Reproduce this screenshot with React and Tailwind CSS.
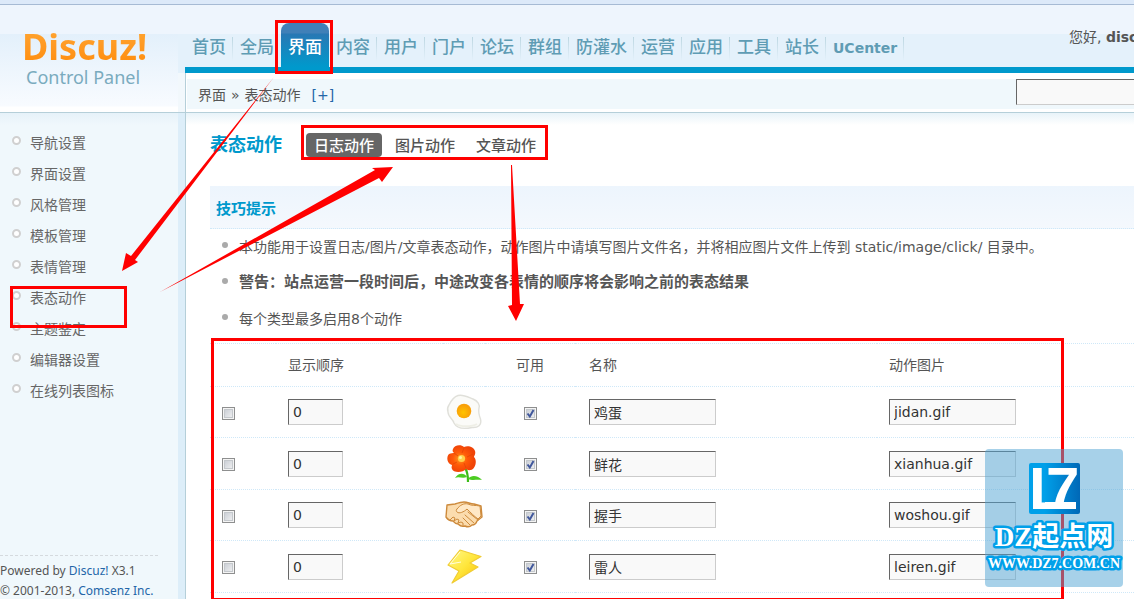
// src/App.jsx
import React from 'react';
import clsx from 'clsx';

const navItems = ['首页', '全局', '界面', '内容', '用户', '门户', '论坛', '群组', '防灌水', '运营', '应用', '工具', '站长', 'UCenter'];
const sideItems = ['导航设置', '界面设置', '风格管理', '模板管理', '表情管理', '表态动作', '主题鉴定', '编辑器设置', '在线列表图标'];
const tabs = ['日志动作', '图片动作', '文章动作'];

const rows = [
  { name: '鸡蛋', file: 'jidan.gif', Icon: EggIcon },
  { name: '鲜花', file: 'xianhua.gif', Icon: FlowerIcon },
  { name: '握手', file: 'woshou.gif', Icon: HandshakeIcon },
  { name: '雷人', file: 'leiren.gif', Icon: BoltIcon },
];

const inputClass = 'h-[26px] border border-t-[#666] border-l-[#666] border-r-[#ccc] border-b-[#ccc] bg-[#f9f9f9] px-1 text-sm text-[#333] outline-none';

function EggIcon() {
  return (
    <svg width="40" height="40" viewBox="0 0 40 40" className="mx-auto block">
      <defs>
        <radialGradient id="yolk" cx="45%" cy="60%">
          <stop offset="0" stopColor="#ffc400" />
          <stop offset="1" stopColor="#f9a008" />
        </radialGradient>
      </defs>
      <path d="M5 13C7 9 9 5 14 3.500C19 2 24 5 29 7C34 9 36 13 35 16C34 20 35 23 36.500 27C38 33 34 36 28 35.500C21 37 13 37 10 31C9 27 4 25 4 20C3 17 3.500 15 5 13Z" fill="#fbfbf8" stroke="#e0e0da" strokeWidth="1.4" />
      <path d="M12 32C16 35 28 35 33 32" fill="none" stroke="#efefe6" strokeWidth="2" />
      <circle cx="20" cy="19" r="7.3" fill="url(#yolk)" />
    </svg>
  );
}

function FlowerIcon() {
  return (
    <svg width="40" height="40" viewBox="0 0 40 40" className="mx-auto block">
      <defs>
        <radialGradient id="petal" cx="45%" cy="50%">
          <stop offset="0" stopColor="#ff9a20" />
          <stop offset="0.5" stopColor="#ff5a08" />
          <stop offset="1" stopColor="#f04408" />
        </radialGradient>
      </defs>
      <path d="M21 24C24 28 24 33 24 38" fill="none" stroke="#3cbc18" strokeWidth="2.2" />
      <path d="M23 33C18 35 15 32 11 34C14 29 20 28 23 33Z" fill="#4ccc22" />
      <path d="M24 35C28 30 34 32 38 36C33 35 29 37 24 35Z" fill="#4ccc22" />
      <path d="M9 5C10 1 17 0 20 3C24 1 30 3 31 7C32 10 30 12 30 13C33 16 32 22 29 25C26 27 23 26 22 25C19 29 9 29 8 25C7 23 8 22 8 21C3 20 2 13 5 10C7 9 9 9 10 9C9 8 8 7 9 5Z" fill="url(#petal)" />
      <path d="M20 4L18 9M29 10L23 13M22 24L20 19M9 20L13 18M10 9L14 12" stroke="#e04406" strokeWidth="0.700" fill="none" />
      <circle cx="17.500" cy="14.500" r="3.600" fill="#ffd04a" />
      <circle cx="16.500" cy="13.500" r="1.500" fill="#fff3a0" />
    </svg>
  );
}

function HandshakeIcon() {
  return (
    <svg width="40" height="40" viewBox="0 0 40 40" className="mx-auto block" strokeLinejoin="round" strokeLinecap="round">
      <path d="M3 10L11 9C14 8 17 7 20 7C24 7 26 9 30 9L37 11L38 22L33 26C32 29 30 30 28 30C26 32 23 32 21 31C18 32 16 31 14 29C11 29 10 27 9 26C6 26 4 25 2 22Z" fill="#fbdcae" stroke="#cd8a3c" strokeWidth="1.400" />
      <path d="M13 14C16 10 20 8 24 9C28 11 31 10 36 11L37 21L34 24C30 21 27 18 23 14C20 17 15 19 13 17C12 16 12 15 13 14Z" fill="#ffe8c6" stroke="#cd8a3c" strokeWidth="1" />
      <path d="M24 17L34 25M21 20L30 28M19 23L26 30" fill="none" stroke="#cd8a3c" strokeWidth="1" />
      <path d="M6 25L9 22L11 23L10 26M10 26L13 24L15 25L14 28M14 28L17 27L19 28L19 31" fill="none" stroke="#cd8a3c" strokeWidth="1" />
    </svg>
  );
}

function BoltIcon() {
  return (
    <svg width="40" height="40" viewBox="0 0 40 40" className="mx-auto block" strokeLinejoin="round">
      <defs>
        <linearGradient id="bolt" x1="0" y1="0" x2="1" y2="1">
          <stop offset="0" stopColor="#fff98c" />
          <stop offset="0.5" stopColor="#ffe63c" />
          <stop offset="1" stopColor="#f8bc00" />
        </linearGradient>
      </defs>
      <path d="M16 3L37 9.500L26 16L34 20L8 36L15 24L4 18Z" fill="url(#bolt)" stroke="#f0cc34" strokeWidth="1.200" />
      <path d="M16 5L6 17L17 15" fill="none" stroke="#fffde0" strokeWidth="1" />
    </svg>
  );
}

function CheckBox({ label, checked = false }) {
  return (
    <label className="relative inline-block size-[13px] align-middle">
      <input
        type="checkbox"
        aria-label={label}
        defaultChecked={checked}
        className="peer block size-[13px] appearance-none border border-[#8e8f8f] bg-linear-to-br from-[#c3c8d0] to-[#f6f6f6] shadow-[inset_0_0_0_1px_#f4f4f4,inset_0_0_0_2px_#c4c8cc]"
      />
      <svg viewBox="0 0 13 13" className="pointer-events-none absolute inset-0 hidden peer-checked:block">
        <path d="M3.500 6.500L5.800 9.500L9.500 3" fill="none" stroke="#41589c" strokeWidth="2" />
      </svg>
    </label>
  );
}

function Header() {
  return (
    <header className="flex h-[108px] border-b border-[#b5cfd9] bg-white">
      <div className="w-[178px] shrink-0 bg-[linear-gradient(#eef5fd_29px,#e3f0fb_29px,#f8fbff_101px,#fff_102px)] pt-5 pl-[22px]">
        <a href="#" className="block">
          <span className="block bg-linear-to-b from-[#ffa733] to-[#ff8a00] bg-clip-text font-['Noto_Sans',sans-serif] text-4xl leading-[44px] font-bold text-transparent">Discuz!</span>
          <span className="block pl-1 font-['Noto_Sans',sans-serif] text-lg leading-4 text-[#7aabbe]">Control Panel</span>
        </a>
      </div>

      <div className="flex min-w-0 flex-1 flex-col bg-[linear-gradient(#eef5fd_29px,#e4f1fb_29px)]">
        <div className="flex h-[62px] items-end justify-between pl-[7px]">
          <nav className="flex shrink-0">
            {navItems.map((item) => {
              const active = item === '界面';
              return (
                <a
                  key={item}
                  href="#"
                  className={clsx(
                    'flex h-[44px] items-center pt-[6px] whitespace-nowrap',
                    active
                      ? 'w-[48px] justify-center rounded-t-lg bg-[linear-gradient(#4080b8_10px,#2878b4_11px,#0099cc)] font-bold text-white'
                      : 'bg-[position:right_14px] bg-[length:1px_24px] bg-no-repeat pr-[7px] pl-[7px] text-[#5f9cb4]',
                    !active && item !== '全局' && 'bg-[linear-gradient(#bdd7e2,#e4f1fb)]',
                    item === 'UCenter' ? 'text-sm font-bold' : 'text-[17px] font-medium'
                  )}
                >
                  {item}
                </a>
              );
            })}
          </nav>
          <p className="w-[65px] shrink-0 self-start overflow-hidden pt-[22px] text-sm whitespace-nowrap text-[#555]">
            您好, <strong>disc</strong>
          </p>
        </div>

        <div className="ml-[7px] h-[6px] shrink-0 bg-[#0099cc]" />

        <div className="-mt-[6px] flex flex-1 pt-[6px]">
          <div className="w-[7px] shrink-0 bg-[#f2f8fc]" />
          <div className="flex min-w-0 flex-1 items-start justify-between border-l border-[#b5cfd9] bg-white pt-[6px] pl-[1px]">
            <div className="flex h-[30px] min-w-0 flex-1 items-start justify-between bg-[#f0f8fc]">
              <p className="flex gap-[5px] pl-[11px] text-sm leading-8 text-[#555]">
                <span>界面</span>
                <span>»</span>
                <span>表态动作</span>
                <a href="#" className="pl-[6px] text-[#2366a8]">[+]</a>
              </p>
              <input type="text" aria-label="搜索" className={clsx(inputClass, 'w-[118px] border-r-0')} />
            </div>
          </div>
        </div>
      </div>
    </header>
  );
}

function Sidebar() {
  return (
    <aside className="flex w-[186px] shrink-0 flex-col border-r border-[#b5cfd9] bg-[#ddeef9] pr-[7px]">
      <div className="flex flex-1 flex-col bg-[#f0f8fc] bg-[linear-gradient(#e6f2f9,#f0f8fc_12px)] pt-[14px]">
        <ul>
          {sideItems.map((item) => (
            <li key={item} className="flex h-[31px] items-center gap-[9px] pl-[12px]">
              <span className="mb-1 size-[9px] shrink-0 rounded-full border-2 border-[#d0d0d0] bg-white" />
              <a href="#" className="text-sm text-[#666]">{item}</a>
            </li>
          ))}
        </ul>
        <p className="mt-auto mr-5 -mb-[2px] border-t border-dashed border-[#d5dade] pt-[5px] font-['Noto_Sans',sans-serif] text-xs leading-5 whitespace-nowrap text-[#555]">
          Powered by <a href="#" className="text-[#2366a8]">Discuz!</a> X3.1
          <br />
          © 2001-2013, <a href="#" className="text-[#2366a8]">Comsenz Inc.</a>
        </p>
      </div>
    </aside>
  );
}

function Tips() {
  return (
    <section>
      <h2 className="h-[43px] border-b border-dotted border-[#cfe8f8] bg-linear-to-b from-[#edf5fd] to-[#f4f8fd] pl-[6px] text-[15px] leading-[46px] font-bold text-[#0099cc]">技巧提示</h2>
      <ul className="text-sm text-[#555]">
        {[
          '本功能用于设置日志/图片/文章表态动作，动作图片中请填写图片文件名，并将相应图片文件上传到 static/image/click/ 目录中。',
          <strong key="warn" className="text-[15px]">警告：站点运营一段时间后，中途改变各表情的顺序将会影响之前的表态结果</strong>,
          '每个类型最多启用8个动作',
        ].map((tip, i) => (
          <li key={i} className="flex h-9 items-center gap-[11px] pl-[12px] whitespace-nowrap">
            <span className="mb-1 size-[6px] shrink-0 rounded-full bg-[#aaa]" />
            <span>{tip}</span>
          </li>
        ))}
      </ul>
    </section>
  );
}

function ActionTable() {
  return (
    <table className="mt-[6px] w-full table-fixed border-collapse border-t border-dotted border-[#cfe8f8] text-left text-sm text-[#555]">
      <colgroup>
        <col className="w-[66px]" />
        <col className="w-[167px]" />
        <col className="w-[42px]" />
        <col className="w-[90px]" />
        <col className="w-[302px]" />
        <col />
      </colgroup>
      <thead>
        <tr className="h-[43px] border-b border-dotted border-[#cfe8f8]">
          <th></th>
          <th className="pl-3 font-normal">显示顺序</th>
          <th></th>
          <th className="text-center font-normal">可用</th>
          <th className="pl-[14px] font-normal">名称</th>
          <th className="pl-3 font-normal">动作图片</th>
        </tr>
      </thead>
      <tbody>
        {rows.map(({ name, file, Icon }) => (
          <tr key={file} className="border-b border-dotted border-[#cfe8f8] odd:h-[51px] even:h-[52px]">
            <td className="pl-3"><CheckBox label={`删除${name}`} /></td>
            <td className="pl-3">
              <input type="text" aria-label="显示顺序" defaultValue="0" className={clsx(inputClass, 'block w-[55px]')} />
            </td>
            <td><Icon /></td>
            <td className="text-center"><CheckBox label={`启用${name}`} checked /></td>
            <td className="pl-[14px]">
              <input type="text" aria-label="名称" defaultValue={name} className={clsx(inputClass, 'block w-[127px]')} />
            </td>
            <td className="pl-3">
              <input type="text" aria-label="动作图片" defaultValue={file} className={clsx(inputClass, 'block w-[127px]')} />
            </td>
          </tr>
        ))}
      </tbody>
    </table>
  );
}

/* Red boxes and arrows that mark the steps */
function Annotations() {
  return (
    <svg width="1134" height="599" className="pointer-events-none absolute top-0 left-0">
      <g fill="none" stroke="#f00" strokeWidth="3">
        <rect x="276.500" y="21.500" width="55" height="51" />
        <rect x="302.500" y="126.500" width="244" height="32" />
        <rect x="11.500" y="287.500" width="114" height="39" />
        <rect x="212.500" y="339.500" width="850" height="260" />
      </g>
      <g fill="#f00">
        <polygon points="274,77 131,256 126,253 122,271 138,262 135,260" />
        <polygon points="160,292 375,170 372,168 393,167 382,182 379,178" />
        <polygon points="511,165 512,305 508,306 516,321 524,304 520,304 512,165" />
      </g>
    </svg>
  );
}

function Watermark() {
  return (
    <div className="pointer-events-none absolute top-[449px] left-[985px] size-[138px] rounded bg-[#50a4d3]/50">
      <svg viewBox="0 0 138 138" className="block size-[138px]" fill="#fff">
        <defs>
          <linearGradient id="mark">
            <stop offset="0.3" stopColor="#00a0e9" />
            <stop offset="1" stopColor="#0068b7" />
          </linearGradient>
        </defs>
        <rect x="44" y="14" width="51" height="51" rx="2" fill="url(#mark)" />
        <g fontFamily="Liberation Sans, sans-serif" fontWeight="bold" fontSize="60">
          <text x="44" y="60">L</text>
          <text x="61" y="60">7</text>
        </g>
        <rect x="60" y="53" width="31" height="7" />
        <g stroke="#00a0e9" strokeWidth="5" strokeLinejoin="round" paintOrder="stroke" fontWeight="bold" textAnchor="middle">
          <text x="69" y="97" fontSize="27" fontFamily="Liberation Serif, Noto Sans CJK SC, serif">DZ起点网</text>
          <text x="69" y="119" fontSize="14" fontFamily="Liberation Serif, serif">WWW.DZ7.COM.CN</text>
        </g>
      </svg>
    </div>
  );
}

function App() {
  return (
    <div className="relative flex h-screen flex-col overflow-hidden bg-white font-['DejaVu_Sans','Noto_Sans_CJK_SC',sans-serif]">
      <div className="h-[5px] shrink-0 border-b border-[#a6bad4] bg-[#dce9f9]" />
      <Header />

      <div className="flex min-h-0 flex-1">
        <Sidebar />
        <main className="min-w-0 flex-1 bg-[linear-gradient(#e8f3f9,#fff_12px)] pl-6">
          <div className="flex h-[73px] items-start gap-6 pt-5">
            <h1 className="text-lg leading-6 font-bold text-[#0099cc]">表态动作</h1>
            <div className="flex gap-[5px]">
              {tabs.map((tab, i) => (
                <button
                  key={tab}
                  type="button"
                  className={clsx(
                    'h-6 rounded px-2 text-[15px] leading-[26px] font-medium whitespace-nowrap',
                    i === 0 ? 'bg-[#666] text-white' : 'text-[#555]'
                  )}
                >
                  {tab}
                </button>
              ))}
            </div>
          </div>
          <Tips />
          <ActionTable />
        </main>
      </div>

      <Annotations />
      <Watermark />
    </div>
  );
}

export default App;
